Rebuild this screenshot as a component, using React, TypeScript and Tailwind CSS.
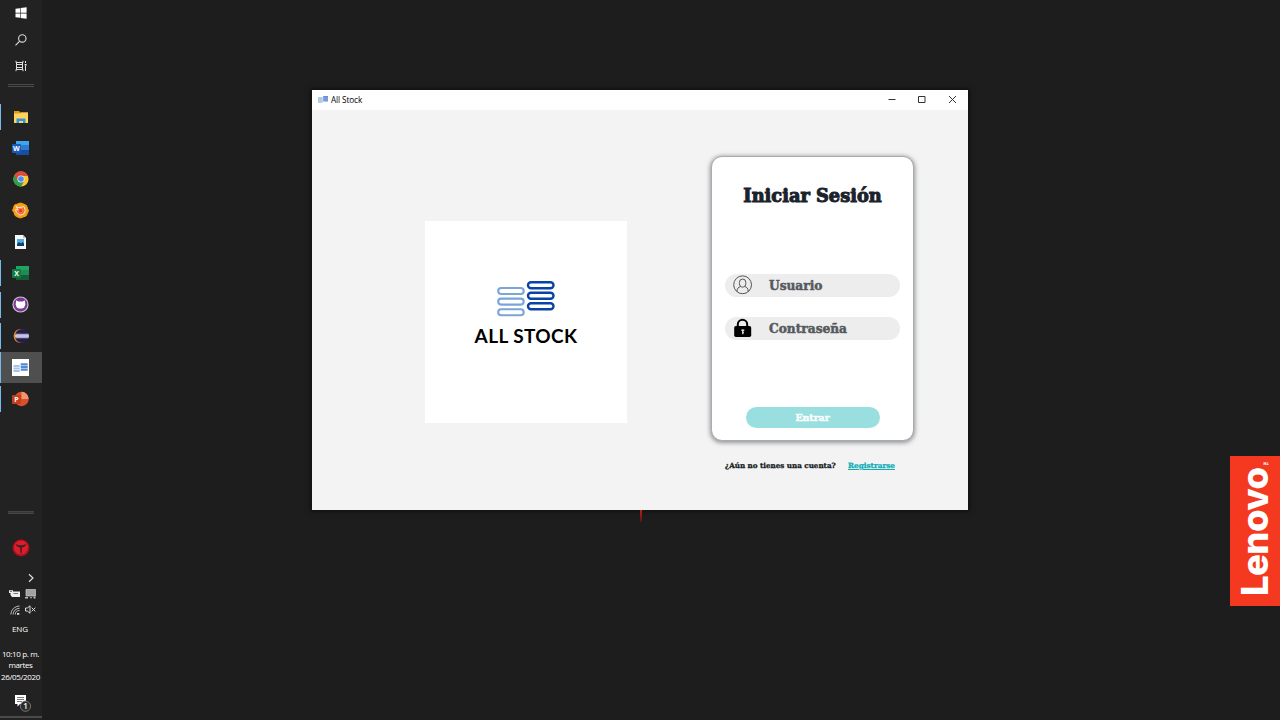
import type { ReactNode } from "react";

const serif = "font-['DejaVu_Serif',serif] font-bold whitespace-nowrap";

function Task({ open, active, children }: { open?: boolean; active?: boolean; children: ReactNode }) {
  return (
    <div className={`flex h-[31.35px] w-full items-center ${active ? "bg-[#4f4f4f]" : ""}`}>
      <div className={`w-[1px] ${open ? "bg-[#76b9ed]" : ""} ${active ? "h-full" : "h-[26px]"}`} />
      <div className="flex flex-1 justify-center pr-[2px]">{children}</div>
    </div>
  );
}

function Office({ letter, tile, top, mid, low }: { letter: string; tile: string; top: string; mid: string; low: string }) {
  return (
    <svg width="17" height="16" viewBox="0 0 17 16">
      <path d="M4 1h13v5H4z" fill={top} />
      <path d="M4 5h13v5H4z" fill={mid} />
      <path d="M4 10h13v5H4z" fill={low} />
      <rect x="0" y="4" width="9" height="9" rx="1" fill={tile} />
      <text x="4.5" y="11" textAnchor="middle" fontSize="7" fontWeight="700" fontFamily="Open Sans, sans-serif" fill="#fff">{letter}</text>
    </svg>
  );
}

function Taskbar() {
  return (
    <aside className="flex h-full w-[42px] flex-col bg-[#222222] font-['Open_Sans',sans-serif] text-white">
      <div className="flex h-[26px] items-center justify-center pr-px">
        <svg width="12" height="12" viewBox="0 0 12 12" fill="#fff">
          <path d="M0.5 1.8 5 1.2v4.5H.5zM5.6 1.1 11.6.3v5.4h-6zM.5 6.4H5v4.4l-4.5-.6zM5.6 6.4h6v5.3l-6-.8z" />
        </svg>
      </div>
      <div className="flex h-[27px] items-center justify-center pr-px">
        <svg width="12" height="12" viewBox="0 0 12 12" fill="none" stroke="#ddd" strokeWidth="1.1">
          <circle cx="7.3" cy="4.4" r="3.7" /><path d="M4.7 7.1.5 11.4" />
        </svg>
      </div>
      <div className="flex h-[26px] items-center justify-center pr-px">
        <svg width="12" height="12" viewBox="0 0 12 12" fill="none" stroke="#ddd" strokeWidth="1">
          <path d="M1 .8v1.7h7V.8M1 11.2V9.5h7v1.7M1.5 2.5v7M7.5 2.5v7M2 4.5h5M2 7.500h5M10.5 1v2M10.5 6v5" /><path d="M9.7 4h1.8v1.6H9.7z" fill="#fff" stroke="none" />
        </svg>
      </div>
      <div className="mx-2 mt-[5px] h-[3px] shrink-0 border-y border-[#4b4b4b]" />
      <div className="mt-[14px] flex flex-col">
        <Task open>
          <svg width="16" height="14" viewBox="0 0 16 14">
            <path d="M1 1h5l1.5 1.5H15V6H1z" fill="#e09a1c" /><path d="M1 3.5h6L8 2.5h7V13H1z" fill="#ffd45c" />
            <path d="M3.5 13V8.5h9V13H10v-2H6v2z" fill="#3193df" />
          </svg>
        </Task>
        <Task><Office letter="W" tile="#1b5abd" top="#41a5ee" mid="#2b7cd3" low="#174ea0" /></Task>
        <Task>
          <svg width="16" height="16" viewBox="0 0 16 16">
            <circle cx="8" cy="8" r="7.6" fill="#fbc72e" />
            <path d="M8 8 1.4 4.2A7.6 7.6 0 0 0 8 15.6L11.3 10z" fill="#2f9e4f" />
            <path d="M1.4 4.2a7.6 7.6 0 0 1 13.2 0L15 5H8L4.7 9.8z" fill="#de4a3c" />
            <circle cx="8" cy="8" r="3.6" fill="#f4e9dc" /><circle cx="8" cy="8" r="2.8" fill="#4b8bf4" />
          </svg>
        </Task>
        <Task>
          <svg width="17" height="17" viewBox="0 0 17 17">
            <path d="m8.5 1 3 1 3 1.5 1 3 1 2-1 2.5-1.5 3-3 1-2.500 1-3-1-2.500-1.500-1-3-1.500-2 1-2.500 1-3 3-1z" fill="#f5a013" stroke="#f5a013" strokeLinejoin="round" />
            <path d="m4 4.500 3 1.200 5-1 1.300 3.800-1.800 3.600-3.500 1-3.500-2.700-1-2.800 2.500.4z" fill="#ef6132" stroke="#ffe8cc" strokeWidth="1" />
            <path d="m6.500 7 4-.5.5 3-2.500 1.500-2-1.500z" fill="#e93c19" stroke="#ffb282" strokeWidth=".6" />
          </svg>
        </Task>
        <Task>
          <svg width="11" height="14" viewBox="0 0 11 14">
            <path d="M0 0h8l3 3v11H0z" fill="#f7f7f7" /><path d="M8 0v3h3" fill="#b9b9b9" />
            <path d="M2 4h7v7H2z" fill="#4dafe2" /><path d="m2 9 2-2 2 1.5L7.5 7 9 8.5V11H2z" fill="#123d6a" />
          </svg>
        </Task>
        <Task open><Office letter="X" tile="#107c41" top="#21a366" mid="#1d8d58" low="#185c37" /></Task>
        <Task open>
          <svg width="17" height="17" viewBox="0 0 17 17">
            <circle cx="8.5" cy="8.5" r="7.5" fill="#7b3795" stroke="#c9c5cd" strokeWidth="1.2" />
            <path d="M4.2 4.3 6.3 5.4h4.4l2.1-1.1.6 4.2-1.2 3-2 1H6.8l-2-1-1.2-3z" fill="#fff" />
          </svg>
        </Task>
        <Task open>
          <svg width="16" height="16" viewBox="0 0 16 16">
            <circle cx="7.6" cy="8" r="7" fill="#e98f20" /><circle cx="9" cy="8" r="7" fill="#241e4b" />
            <path d="M2.4 5.8h13.2l.4 2.2-.4 2.2H2.4L2 8z" fill="#b0aad0" /><path d="M2.2 7.5h13.6v1H2.2z" fill="#dedbea" />
          </svg>
        </Task>
        <Task open active>
          <svg width="17" height="17" viewBox="0 0 17 17">
            <path d="M0 0h17v17H0z" fill="#fff" />
            <path d="M1.5 6h6.2v1.9H1.5zM1.5 8.5h6.2v1.9H1.5zM1.5 11h6.2v1.9H1.5z" fill="#a9c2e9" />
            <path d="M8.7 4.3h7v2.2h-7zM8.7 7h7v2.2h-7zM8.7 9.7h7v2.1h-7z" fill="#5589d1" />
          </svg>
        </Task>
        <Task open>
          <svg width="17" height="16" viewBox="0 0 17 16">
            <circle cx="9.5" cy="8" r="7.2" fill="#d9512c" /><path d="M9.5.8a7.2 7.2 0 0 1 7.2 7.2H9.5z" fill="#f79272" />
            <rect x="0" y="4" width="9" height="9" rx="1" fill="#c43e1c" />
            <text x="4.5" y="11" textAnchor="middle" fontSize="7" fontWeight="700" fontFamily="Open Sans, sans-serif" fill="#fff">P</text>
          </svg>
        </Task>
      </div>
      <div className="mx-2 mt-auto h-[3px] shrink-0 border-y border-[#454545] bg-[#353535]" />
      <div className="mt-[25px] flex h-[18px] shrink-0 justify-center pr-px">
        <svg width="18" height="18" viewBox="0 0 18 18">
          <circle cx="9" cy="9" r="8.5" fill="#a7101c" /><circle cx="9" cy="8.5" r="7" fill="#dc1d2c" />
          <path d="M3.6 5 7 6.2h4L14.4 5l-1.6 2.6-2.9.8-.3 5.8H8.4l-.3-5.8-2.900-.8z" fill="#3b2024" />
        </svg>
      </div>
      <div className="mt-[16px] flex h-[10px] shrink-0 justify-end pr-[8px]">
        <svg width="6" height="10" viewBox="0 0 6 10" fill="none" stroke="#ddd" strokeWidth="1.2"><path d="m1 1.2 4 3.8-4 3.8" /></svg>
      </div>
      <div className="mt-[6px] flex h-[10px] shrink-0 items-center justify-between pl-[9px] pr-[6px]">
        <svg width="11" height="8" viewBox="0 0 11 8"><path d="M0 .3h4v1.2h7V7H3L1.5 5V3H0z" fill="#eee" /><path d="M1 1h2v1H1zM4.5 3H9v1H4.5z" fill="#777" /></svg>
        <svg width="11" height="10" viewBox="0 0 11 10"><path d="M1 .5h9.5V7H1z" fill="#a2a2a2" stroke="#ccc" strokeWidth=".7" /><path d="M0 8h3v1.5H0zM5 8.3h2v1H5zM8.5 7.5h2v2h-2z" fill="#bbb" /></svg>
      </div>
      <div className="mt-[6px] flex h-[10px] shrink-0 items-center justify-between pl-[10px] pr-[6px]">
        <svg width="10" height="10" viewBox="0 0 10 10" fill="none" stroke="#bbb" strokeWidth="1"><path d="M.8 9.5A8.7 8.7 0 0 1 9.5 1M3 9.5A6.5 6.5 0 0 1 9.5 3.3M5.2 9.5a4.3 4.3 0 0 1 4.3-4" /><path d="M7 8h2.3v1.8H7z" fill="#ddd" stroke="none" /></svg>
        <svg width="11" height="9" viewBox="0 0 11 9" fill="none" stroke="#ddd" strokeWidth="1"><path d="M.5 3h1.8L5 .8v7.400L2.300 6H.5zM6.700 2.700l3.600 3.600M10.300 2.700 6.700 6.300" /></svg>
      </div>
      <div className="mt-[8px] h-[12px] shrink-0 pr-[2px] text-center text-[8px] leading-[12px] tracking-[-0.1px]">ENG</div>
      <div className="mt-[13px] shrink-0 pr-px text-center text-[8px] leading-[11.4px] tracking-[-0.35px] whitespace-nowrap">
        <div>10:10 p. m.</div><div>martes</div><div>26/05/2020</div>
      </div>
      <div className="mt-[13px] flex h-[18px] shrink-0 justify-center pl-[4px]">
        <svg width="18" height="18" viewBox="0 0 18 18">
          <path d="M1 0h11v9H6l-2.5 2.5V9H1z" fill="#fff" /><path d="M3 2.5h7M3 4.5h7M3 6.5h5" stroke="#555" strokeWidth=".8" />
          <circle cx="11.5" cy="11.2" r="5.1" fill="#2c2c2c" stroke="#777" strokeWidth="1" />
          <text x="11.5" y="14.2" textAnchor="middle" fontSize="8" fontWeight="600" fontFamily="Open Sans, sans-serif" fill="#fff">1</text>
        </svg>
      </div>
      <div className="mb-[2px] mt-[3px] h-[2px] shrink-0 bg-[#4a4a4a]" />
    </aside>
  );
}

function StackLogo() {
  return (
    <svg width="58" height="36" viewBox="0 0 58 36" fill="none" strokeWidth="2.1">
      <g stroke="#7ba4d9"><rect x="1.2" y="7" width="25.5" height="6" rx="3" /><rect x="1.2" y="17.6" width="25.5" height="6" rx="3" /><rect x="1.2" y="28.2" width="25.5" height="6" rx="3" /></g>
      <g stroke="#0744a5" strokeWidth="2.4"><rect x="31" y="1.2" width="25.5" height="6" rx="3" /><rect x="31" y="11.8" width="25.5" height="6" rx="3" /><rect x="31" y="22.2" width="25.5" height="6" rx="3" /></g>
    </svg>
  );
}

function Field({ icon, label }: { icon: ReactNode; label: string }) {
  return (
    <div className="flex h-[23.5px] w-[175px] items-center rounded-full bg-[#ededed] pl-[8px]">
      <span className="flex w-[36px] items-center">{icon}</span>
      <span className={`${serif} pt-[2px] text-[12.2px] leading-[21px] text-[#565a60] [-webkit-text-stroke:0.5px_#565a60]`}>{label}</span>
    </div>
  );
}

function LoginWindow() {
  return (
    <main className="ml-[270px] mt-[90px] flex h-[420px] w-[656px] flex-col bg-[#f3f3f3] shadow-[0_0_5px_1px_rgba(0,0,0,0.6)]">
      <header className="flex h-5 shrink-0 items-center bg-white pb-px pl-[6px] pr-[12px]">
        <svg width="10" height="7" viewBox="0 0 10 7"><path d="M0 1h4.7v6H0z" fill="#bccfec" /><path d="M0 2.8h4.7M0 4.8h4.7" stroke="#9bb9e3" strokeWidth=".6" /><path d="M5.2 0H10v5.5H5.2z" fill="#638fd2" /><path d="M5.2 2h4.8M5.2 4h4.8" stroke="#a6c1e8" strokeWidth=".6" /></svg>
        <span className="ml-[3px] font-['Open_Sans',sans-serif] text-[8.2px] leading-[19px] tracking-[-0.1px] text-black">All Stock</span>
        <svg className="ml-auto" width="70" height="9" viewBox="0 0 70 9" fill="none" stroke="#333" strokeWidth="1">
          <path d="M2.500 4.500h7M32.500 1.500h6.500v6h-6.500zM63 1l7 7M70 1l-7 7" />
        </svg>
      </header>
      <div className="flex flex-1">
        <section className="ml-[113px] mt-[111px] flex h-[202px] w-[202px] flex-col items-center bg-white pt-[59.5px]">
          <div className="pr-px"><StackLogo /></div>
          <div className="mt-[8px] font-['Lato',sans-serif] text-[19px] font-bold leading-[22px] tracking-[0.4px] whitespace-nowrap text-black">ALL STOCK</div>
        </section>
        <section className="ml-[84px] mt-[46px] flex w-[203px] flex-col">
          <div className="flex h-[285px] shrink-0 flex-col items-center rounded-[11px] border border-[#aaabb0] bg-white shadow-[0_1px_4px_1px_rgba(70,72,80,0.55)]">
            <h1 className={`${serif} mt-[25px] text-[17.8px] leading-[28px] text-[#1b222b] [-webkit-text-stroke:1px_#1b222b]`}>Iniciar Sesión</h1>
            <div className="mt-[63.5px] flex flex-col gap-[19.5px]">
              <Field label="Usuario" icon={
                <svg width="20" height="20" viewBox="0 0 20 20" fill="none" stroke="#444" strokeWidth=".9">
                  <circle cx="9.6" cy="9.8" r="8.9" /><path d="M6.4 7.4a3.2 3.4 0 0 1 6.400 0v1.300c0 2-1.500 3.400-3.200 3.400S6.400 10.700 6.400 8.700zM4 16.500c0-3 1.300-4.500 3.700-5M15.200 16.500c0-3-1.300-4.500-3.700-5" />
                </svg>} />
              <Field label="Contraseña" icon={
                <svg width="19" height="20" viewBox="0 0 19 20">
                  <path d="M4.8 9V6.5a4.7 4.7 0 0 1 9.4 0V9" fill="none" stroke="#000" strokeWidth="2" />
                  <rect x="1.2" y="8" width="17" height="11" rx="1.7" fill="#000" />
                  <path d="M8.3 12.2h3M9.8 12.2v4M9.8 14.5h1" stroke="#fff" strokeWidth="1.2" />
                </svg>} />
            </div>
            <button className={`${serif} mt-[66.5px] h-[21.5px] w-[134px] rounded-full bg-[#99dfe0] text-[9.4px] leading-[21.5px] text-white [-webkit-text-stroke:0.4px_#fff]`}>Entrar</button>
          </div>
          <div className={`${serif} mt-[18px] flex pl-[14px] text-[7.15px] leading-[14px] text-[#151b22]`}>
            <span className="w-[123px] [-webkit-text-stroke:0.3px_#151b22]">¿Aún no tienes una cuenta?</span>
            <a className="text-[7.25px] text-[#10adb5] underline [-webkit-text-stroke:0.3px_#10adb5]">Registrarse</a>
          </div>
        </section>
      </div>
    </main>
  );
}

export default function App() {
  return (
    <div className="relative flex h-[720px] w-[1280px] items-start overflow-hidden bg-[#1d1d1d]">
      <Taskbar />
      <LoginWindow />
      <div className="absolute left-[640px] top-[510px] h-[12px] w-[2px] bg-linear-to-b from-[#c41b17] to-[#521616]" />
      <div className="ml-auto mt-[456px] flex h-[150px] w-[50px] rotate-180 items-start bg-[#f53920] pr-[3.5px] pt-[10px] font-['Inter',sans-serif] text-white [writing-mode:vertical-rl]">
        <span className="text-[36.5px] font-extrabold leading-[42px] tracking-[-0.6px]">Lenovo</span>
        <span className="mr-[28px] text-[9px] font-bold leading-[9px]">™</span>
      </div>
    </div>
  );
}
